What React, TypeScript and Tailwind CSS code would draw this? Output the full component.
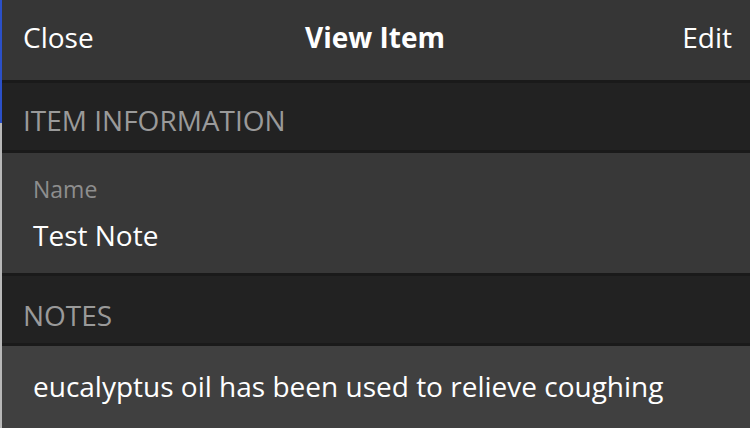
import React from "react";

export default function App() {
  return (
    <div
      className="relative w-[750px] h-[428px] overflow-hidden bg-[#383838] text-white"
      style={{ fontFamily: '"Open Sans", "Noto Sans", sans-serif' }}
    >
      <div className="absolute left-0 top-0 w-[2px] h-[123px] bg-[#2b50c8]" />
      <div className="absolute left-0 top-[123px] w-[2px] h-[305px] bg-[#b8b8b8]" />
      <div className="flex flex-col">
        <header className="h-[80px] bg-[#363636] flex items-center justify-between pl-[23px] pr-[18px] pb-[6px] text-[28px] leading-none">
          <span>Close</span>
          <span className="font-bold absolute left-1/2 -translate-x-1/2 top-[23px]">View Item</span>
          <span>Edit</span>
        </header>
        <div className="h-[3px] bg-[#1a1a1a]" />
        <div className="h-[67px] bg-[#222222] flex items-center pl-[23px] text-[28px] leading-none text-[#9a9a9a] pt-[7px]">
          ITEM INFORMATION
        </div>
        <div className="h-[3px] bg-[#1a1a1a]" />
        <div className="h-[120px] bg-[#383838] flex flex-col pl-[33px] pt-[21px]">
          <span className="text-[23px] leading-[30px] text-[#8e8e8e]">Name</span>
          <span className="text-[28px] leading-[38px] mt-[12px] text-white">Test Note</span>
        </div>
        <div className="h-[3px] bg-[#1a1a1a]" />
        <div className="h-[67px] bg-[#222222] flex items-center pl-[23px] text-[28px] leading-none text-[#9a9a9a] pt-[10px]">
          NOTES
        </div>
        <div className="h-[3px] bg-[#1a1a1a]" />
        <div className="h-[85px] bg-[#404040] flex items-center pl-[33px] text-[28px] leading-none pb-[5px]">
          eucalyptus oil has been used to relieve coughing
        </div>
      </div>
    </div>
  );
}
